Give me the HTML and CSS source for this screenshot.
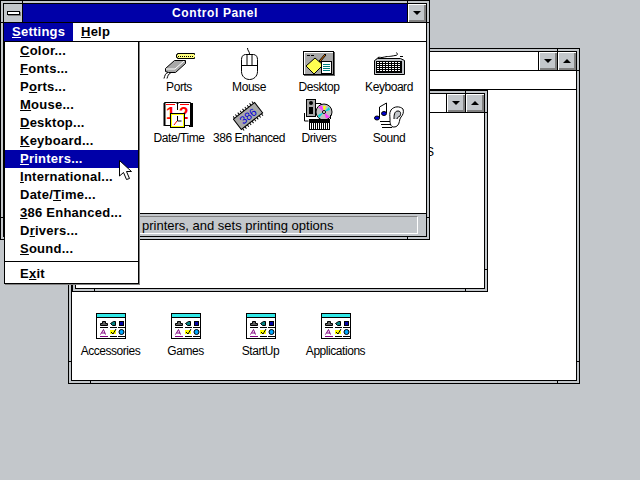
FILE: index.html
```html
<!DOCTYPE html>
<html lang="en">
<head>
<meta charset="utf-8">
<title>Control Panel</title>
<link rel="stylesheet" href="styles.css">
</head>
<body>
<svg class="defs" width="0" height="0" aria-hidden="true">
  <symbol id="group" viewBox="0 0 30 26">
    <rect x="0.5" y="0.5" width="29" height="25" fill="#fff" stroke="#000"/>
    <rect x="1" y="1" width="28" height="3" fill="#30e8e8"/>
    <rect x="1" y="4" width="28" height="1" fill="#000"/>
    <path d="M6.500 8.500h3v2h2v2h-7v-2h2z" fill="#606060" stroke="#000"/>
    <path d="M4 14.500h8" stroke="#000"/>
    <path d="M14.500 10.500l3-2h2v4h-3z" fill="#008080" stroke="#000"/>
    <path d="M14 14.500h7" stroke="#000"/>
    <rect x="23.500" y="8.500" width="4" height="4" fill="#0000a8" stroke="#000"/>
    <path d="M22 14.500h7" stroke="#000"/>
    <path d="M4.500 21.500l3-5 2 5M6 20h3" fill="none" stroke="#800080"/>
    <path d="M4 23.500h8" stroke="#800080"/>
    <path d="M14 17h6v4h-6z" fill="#ffff00"/>
    <path d="M15 19l2 2 3-5" fill="none" stroke="#000"/>
    <path d="M14 23.500h7" stroke="#000"/>
    <circle cx="25.500" cy="19" r="2.500" fill="#00a8ff" stroke="#000"/>
    <path d="M22 23.500h7" stroke="#000"/>
  </symbol>
</svg>

<main class="desktop">
  <section class="window progman">
    <div class="client">
      <header class="titlebar">
        <span class="title"></span>
        <span class="btn"><i class="down"></i></span>
        <span class="btn"><i class="up"></i></span>
      </header>
      <div class="menubar-empty"></div>
      <div class="pm-body">
        <section class="window group">
          <div class="client">
            <header class="titlebar">
              <span class="title"></span>
              <span class="btn"><i class="down"></i></span>
              <span class="btn"><i class="up"></i></span>
            </header>
            <div class="group-body"><span class="peek">S<br>t</span></div>
          </div>
        </section>
        <div class="group-icons">
          <figure class="gicon"><svg width="30" height="26"><use href="#group"/></svg><figcaption>Accessories</figcaption></figure>
          <figure class="gicon"><svg width="30" height="26"><use href="#group"/></svg><figcaption>Games</figcaption></figure>
          <figure class="gicon"><svg width="30" height="26"><use href="#group"/></svg><figcaption>StartUp</figcaption></figure>
          <figure class="gicon"><svg width="30" height="26"><use href="#group"/></svg><figcaption>Applications</figcaption></figure>
        </div>
      </div>
    </div>
  </section>

  <section class="window cpanel">
    <div class="client">
      <header class="titlebar active">
        <span class="btn sys"><i class="bar"></i></span>
        <span class="title">Control Panel</span>
        <span class="btn"><i class="down"></i></span>
      </header>
      <nav class="menubar">
        <span class="menu open"><u>S</u>ettings</span>
        <span class="menu"><u>H</u>elp</span>
      </nav>
      <div class="icons">
        <figure class="cicon first">
          <svg width="32" height="32" viewBox="0 0 32 32">
            <path d="M14.500 5.500h17v1h1v3h-1v1h-17v-1h-1v-3h1z" fill="#ffff80" stroke="#000"/>
            <path d="M15 8.500h16" stroke="#000" stroke-dasharray="1 1"/>
            <path d="M2.500 20.500l9-8h11v3l-10 9h-7l-3-1z" fill="#a8a8a8" stroke="#000"/>
            <path d="M3 21h9l9-8" fill="none" stroke="#fff"/>
            <path d="M5 24.500c-3 1-3 3-4 6M8 24.500c-3 2-3 3-4 6" fill="none" stroke="#000"/>
          </svg>
          <figcaption>Ports</figcaption>
        </figure>
        <figure class="cicon">
          <svg width="32" height="32" viewBox="0 0 32 32">
            <path d="M16.500 6c0-3-2-3-2-6" stroke="#000" fill="none"/>
            <path d="M12.500 6.500h8c3 0 4 3 4 5v12c0 5-4 8-8 8s-8-3-8-8v-12c0-2 1-5 4-5z" fill="#fff" stroke="#000"/>
            <path d="M8.500 17.500h16M14 7v10M19 7v10" stroke="#000" fill="none"/>
          </svg>
          <figcaption>Mouse</figcaption>
        </figure>
        <figure class="cicon">
          <svg width="32" height="32" viewBox="0 0 32 32">
            <rect x="0.500" y="3.500" width="30" height="23" fill="#a8a8a8" stroke="#000"/>
            <path d="M1 4.500h29M1.500 5v21" stroke="#fff"/>
            <path d="M31.500 4v24M1 27.500h31" stroke="#606060"/>
            <path d="M3 18l9-8 8 7-9 9z" fill="#ffff50" stroke="#000"/>
            <path d="M16 13l6-7 1 1-6 7z" fill="#ff8000" stroke="#000"/>
            <rect x="18.500" y="13.500" width="10" height="12" fill="#fff" stroke="#000"/>
            <path d="M20 16.500h7M20 18.500h7M20 20.500h7M20 22.500h7" stroke="#008080"/>
            <path d="M4 7.500h8" stroke="#000" stroke-dasharray="3 1"/>
          </svg>
          <figcaption>Desktop</figcaption>
        </figure>
        <figure class="cicon">
          <svg width="32" height="32" viewBox="0 0 32 32">
            <path d="M4 10.500c1-2 3-1 5-1s3-1 5-1 3 0 8-1c3 0 3-2 1-3" fill="none" stroke="#000"/>
            <path d="M27 8.500h3" stroke="#000"/>
            <path d="M1.500 12.500l3-2h23l4 2v14h-30z" fill="#c3c7cb" stroke="#000"/>
            <rect x="3.500" y="13.500" width="25" height="11" fill="#000" stroke="#000"/>
            <path d="M4 14.500h24M4 16.500h24M4 18.500h24M4 20.500h24M4 22.500h24" stroke="#fff" stroke-dasharray="2 1"/>
          </svg>
          <figcaption>Keyboard</figcaption>
        </figure>
        <figure class="cicon first">
          <svg width="32" height="32" viewBox="0 0 32 32">
            <rect x="26" y="4" width="4" height="24" fill="#000"/>
            <path d="M1.500 3.500h12l1 2 1-2h12v23h-26z" fill="#fff" stroke="#000"/>
            <path d="M1 4v23M2 4v23" stroke="#000"/>
            <path d="M3 5.500h9M17 5.500h9" stroke="#ff0000" fill="none"/>
            <text class="cal" x="3" y="20">1</text>
            <text class="cal" x="16" y="20">2</text>
            <path d="M14.500 3v8" stroke="#000"/>
            <rect x="7.500" y="14.500" width="14" height="14" fill="#ffff00" stroke="#000"/>
            <rect x="9" y="16" width="11" height="11" fill="#fff"/>
            <path d="M14.500 17v5h4" fill="none" stroke="#000"/>
            <path d="M14 22l-3 4" stroke="#ff0000"/>
          </svg>
          <figcaption>Date/Time</figcaption>
        </figure>
        <figure class="cicon">
          <svg width="32" height="32" viewBox="0 0 32 32">
            <g transform="rotate(-38 15 17)">
              <path d="M3 8v18M6 8v18M9 8v18M12 8v18M15 8v18M18 8v18M21 8v18M24 8v18M27 8v18" stroke="#000"/>
              <rect x="1.500" y="10.500" width="27" height="13" fill="#a8a8a8" stroke="#000"/>
              <text class="chip" x="15" y="21" text-anchor="middle">386</text>
            </g>
          </svg>
          <figcaption>386 Enhanced</figcaption>
        </figure>
        <figure class="cicon">
          <svg width="32" height="32" viewBox="0 0 32 32">
            <rect x="3.500" y="0.500" width="9" height="17" fill="#a8a8a8" stroke="#000"/>
            <circle cx="8" cy="4" r="2" fill="#000"/>
            <rect x="6" y="8" width="4" height="7" fill="#000"/>
            <path d="M12 4.500h6v2M1.500 14v8h4" fill="none" stroke="#000"/>
            <circle cx="21" cy="13" r="8" fill="#c0c0c0" stroke="#000"/>
            <path d="M21 13l-6-5 4-1.500zM21 13l6 5-4 1.500z" fill="#ff40ff"/>
            <path d="M21 13l-6 3 1 3zM21 13l5-5 1 3z" fill="#00d8d8"/>
            <path d="M21 13l-1-6 3 0z" fill="#ffff00"/>
            <circle cx="21" cy="13" r="1.500" fill="#fff" stroke="#000"/>
            <rect x="6.500" y="20.500" width="20" height="10" fill="#fff" stroke="#000"/>
            <rect x="7" y="21" width="19" height="3" fill="#000"/>
            <path d="M8.500 24v6M10.500 24v6M12.500 24v6M14.500 24v6M16.500 24v6M18.500 24v6M20.500 24v6M22.500 24v6M24.500 24v6" stroke="#000"/>
            <path d="M27.500 20v-4" stroke="#000"/>
          </svg>
          <figcaption>Drivers</figcaption>
        </figure>
        <figure class="cicon">
          <svg width="32" height="32" viewBox="0 0 32 32">
            <path d="M6.500 8v11M13.500 4v10M6.500 8l7-4" fill="none" stroke="#000"/>
            <ellipse cx="4" cy="19" rx="2.500" ry="2" fill="#0000d8" stroke="#000"/>
            <ellipse cx="11" cy="14.500" rx="2.500" ry="2" fill="#0000d8" stroke="#000"/>
            <path d="M20 28c-3-1-3-5-3-8 0-3-1-6 1-9 3-4 9-4 12-1 1 3 0 6-2 8-2 2-1 7-4 9-1 1-3 1-4 1z" fill="#fff" stroke="#000"/>
            <path d="M21 20c0-3 0-8 4-8 3 0 3 3 2 5-1 1-3 1-3 3" fill="#c3c7cb" stroke="#000"/>
            <path d="M7 22.500h10M8 25.500h10M9 28.500h10" stroke="#000"/>
          </svg>
          <figcaption>Sound</figcaption>
        </figure>
      </div>
      <footer class="status"><span class="status-text">printers, and sets printing options</span></footer>
    </div>
  </section>

  <ul class="dropdown">
    <li><u>C</u>olor...</li>
    <li><u>F</u>onts...</li>
    <li>P<u>o</u>rts...</li>
    <li><u>M</u>ouse...</li>
    <li><u>D</u>esktop...</li>
    <li><u>K</u>eyboard...</li>
    <li class="selected"><u>P</u>rinters...</li>
    <li><u>I</u>nternational...</li>
    <li>Date/<u>T</u>ime...</li>
    <li><u>3</u>86 Enhanced...</li>
    <li>D<u>r</u>ivers...</li>
    <li><u>S</u>ound...</li>
    <li class="sep"></li>
    <li>E<u>x</u>it</li>
  </ul>

  <svg class="cursor" width="16" height="22" viewBox="0 0 16 22">
    <path d="M0.500 0.500v15.500l4-3.500 3 7 3-1-3-7h5z" fill="#fff" stroke="#000"/>
  </svg>
</main>
</body>
</html>
```

FILE: styles.css
```css
* { box-sizing: border-box; }

html, body {
  margin: 0;
  width: 640px;
  height: 480px;
  overflow: hidden;
  background: #c3c7cb;
}

.defs { position: absolute; }

.desktop {
  position: relative;
  width: 640px;
  height: 480px;
  font-family: "Liberation Sans", Arial, sans-serif;
  font-size: 12px;
  color: #000;
}

/* Window frame: outer line, 2px gray sizing border with corner ticks, inner line */
.window {
  position: absolute;
  border: 1px solid #000;
  padding: 2px;
  background-color: #c3c7cb;
  background-image:
    linear-gradient(#000, #000), linear-gradient(#000, #000),
    linear-gradient(#000, #000), linear-gradient(#000, #000),
    linear-gradient(#000, #000), linear-gradient(#000, #000),
    linear-gradient(#000, #000), linear-gradient(#000, #000);
  background-repeat: no-repeat;
  background-size:
    1px 2px, 1px 2px, 1px 2px, 1px 2px,
    2px 1px, 2px 1px, 2px 1px, 2px 1px;
  background-position:
    21px 0, calc(100% - 21px) 0, 21px 100%, calc(100% - 21px) 100%,
    0 21px, 100% 21px, 0 calc(100% - 21px), 100% calc(100% - 21px);
}

.client {
  display: flex;
  flex-direction: column;
  height: 100%;
  border: 1px solid #000;
  background: #fff;
}

.progman { left: 68px; top: 48px; width: 512px; height: 336px; }
.group { left: 0; top: 0; width: 416px; height: 202px; }
.cpanel { left: 0; top: 0; width: 430px; height: 240px; }

.titlebar {
  display: flex;
  flex: none;
  height: 19px;
  border-bottom: 1px solid #000;
  background: #fff;
}

.titlebar.active { background: #0000a8; color: #fff; }

.title {
  flex: 1;
  text-align: center;
  font-weight: bold;
  font-size: 12px;
  line-height: 18px;
  letter-spacing: 0.6px;
}

.btn {
  display: flex;
  flex: none;
  width: 19px;
  align-items: center;
  justify-content: center;
  border-left: 1px solid #000;
  background: #c3c7cb;
  box-shadow:
    inset 1px 1px 0 #fff,
    inset -1px -1px 0 #808080,
    inset -2px -2px 0 #808080;
}

.btn.sys {
  width: 19px;
  border-left: 0;
  border-right: 1px solid #000;
  box-shadow: none;
}

.btn i { display: block; width: 0; height: 0; }

.btn .down {
  border-style: solid;
  border-width: 4px 4px 0;
  border-color: #000 transparent transparent;
}

.btn .up {
  border-style: solid;
  border-width: 0 4px 4px;
  border-color: transparent transparent #000;
}

.btn .bar {
  width: 13px;
  height: 4px;
  background: #fff;
  border: 1px solid #000;
  box-shadow: 1px 1px 0 #808080;
}

.menubar, .menubar-empty {
  display: flex;
  flex: none;
  height: 19px;
  border-bottom: 1px solid #000;
  background: #fff;
}

.menu {
  display: block;
  padding: 0 8px;
  font-weight: bold;
  font-size: 13px;
  line-height: 18px;
  letter-spacing: 0.25px;
}

.menu.open {
  width: 69px;
  background: #0000a8;
  color: #fff;
}

/* Program Manager interior */
.pm-body {
  position: relative;
  flex: 1;
  display: flex;
  flex-direction: column;
  justify-content: flex-end;
}

.group-body {
  position: relative;
  flex: 1;
}

.peek {
  position: absolute;
  left: 350px;
  top: 33px;
  font-size: 12px;
  line-height: 13px;
}

.group-icons {
  display: grid;
  grid-template-columns: repeat(4, 75px);
  padding: 0 0 22px 1px;
}

.gicon {
  display: flex;
  flex-direction: column;
  align-items: center;
  margin: 0;
}

.gicon svg { display: block; margin-bottom: 5px; }

.gicon figcaption, .cicon figcaption {
  font-size: 12px;
  line-height: 14px;
  letter-spacing: -0.45px;
  white-space: nowrap;
}

/* Control Panel icon grid */
.icons {
  flex: 1;
  display: grid;
  grid-template-columns: repeat(6, 70px);
  grid-auto-rows: 51px;
  padding-top: 6px;
}

.cicon {
  display: flex;
  flex-direction: column;
  align-items: center;
  margin: 0;
}

.cicon.first { grid-column-start: 3; }
.cicon svg { display: block; flex: none; }

.chip {
  font-family: "Liberation Sans", Arial, sans-serif;
  font-size: 11px;
  fill: #0000d8;
}

.cal {
  font-family: "Liberation Sans", Arial, sans-serif;
  font-size: 17px;
  font-weight: bold;
  fill: #ff0000;
}

.status {
  flex: none;
  height: 23px;
  padding: 2px 8px 2px 0;
  border-top: 1px solid #000;
  background: #c3c7cb;
}

.status-text {
  display: block;
  height: 18px;
  padding-left: 137px;
  line-height: 17px;
  font-size: 13px;
  border-top: 1px solid #808080;
  border-left: 1px solid #808080;
  border-right: 1px solid #fff;
  border-bottom: 1px solid #fff;
}

/* Settings menu */
.dropdown {
  position: absolute;
  left: 4px;
  top: 41px;
  width: 135px;
  height: 243px;
  margin: 0;
  padding: 0;
  list-style: none;
  background: #fff;
  border: 1px solid #000;
  box-shadow: 1px 1px 0 #808080;
  font-size: 13px;
  font-weight: bold;
  letter-spacing: 0.25px;
}

.dropdown li {
  height: 18px;
  padding-left: 15px;
  line-height: 18px;
}

.dropdown .selected { background: #0000a8; color: #fff; }

.dropdown .sep {
  height: 1px;
  margin: 3px 0 2px;
  padding: 0;
  background: #000;
}

.dropdown .sep + li { height: 20px; line-height: 20px; }

.cursor {
  position: absolute;
  left: 119px;
  top: 160px;
}
```
